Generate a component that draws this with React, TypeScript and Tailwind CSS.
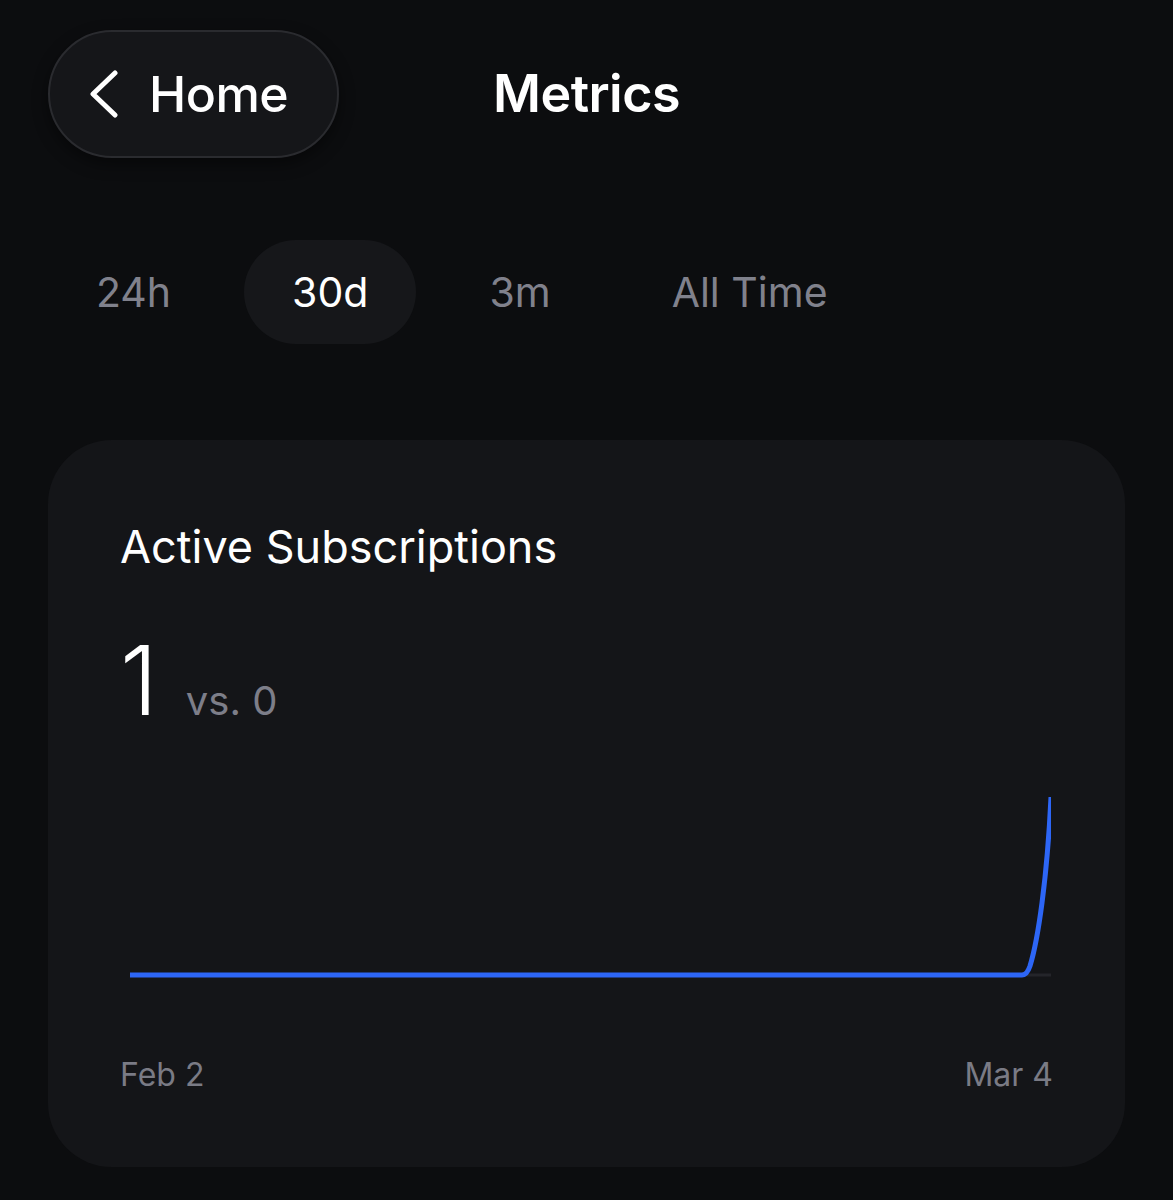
import React, { useState } from 'react';

const tabs = ['24h', '30d', '3m', 'All Time'];

function ChevronLeft() {
  return (
    <svg width="30" height="48" viewBox="0 0 30 48" fill="none">
      <polyline
        points="26,3 4,24 26,45"
        stroke="white"
        strokeWidth="5"
        strokeLinecap="round"
        strokeLinejoin="round"
      />
    </svg>
  );
}

function SubscriptionsChart() {
  return (
    <svg width="931" height="200" viewBox="0 0 931 200" fill="none" className="block">
      <line x1="900" y1="185" x2="933" y2="185" stroke="#24252a" strokeWidth="3" />
      <path
        d="M10 185 L902 185 Q907 185 910 176 C918 150 927 90 931 7"
        stroke="#2d66f6"
        strokeWidth="5"
        strokeLinecap="butt"
        strokeLinejoin="round"
      />
    </svg>
  );
}

export default function App() {
  const [activeTab, setActiveTab] = useState('30d');

  return (
    <div
      className="w-full h-[1200px] bg-[#0c0d0f] px-12 pt-[30px] text-white"
      style={{ fontFamily: 'Inter, "Noto Sans", sans-serif' }}
    >
      {/* Header */}
      <div className="grid grid-cols-[1fr_auto_1fr] items-center">
        <button className="w-[291px] h-[128px] rounded-full bg-[#151619] border-2 border-[#2a2b2f] shadow-[0_6px_16px_rgba(0,0,0,0.45)] flex items-center pl-[39px]">
          <ChevronLeft />
          <span className="ml-[30px] text-[50px] font-medium leading-none tracking-[-0.01em]">Home</span>
        </button>
        <h1 className="text-[52px] font-semibold leading-none tracking-[-0.01em]">Metrics</h1>
        <div />
      </div>

      {/* Range tabs */}
      <div className="mt-[82px] flex gap-[25px]">
        {tabs.map((tab) => (
          <button
            key={tab}
            onClick={() => setActiveTab(tab)}
            className={`h-[104px] px-12 rounded-full text-[41px] leading-none ${
              activeTab === tab ? 'bg-[#16171a] text-white' : 'text-[#80818c]'
            }`}
          >
            {tab}
          </button>
        ))}
      </div>

      {/* Card */}
      <div className="mt-[96px] rounded-[64px] bg-[#141518] pl-[72px] pr-[74px] pt-[84px] pb-[76px]">
        <h2 className="text-[45px] leading-none">Active Subscriptions</h2>
        <div className="mt-[63px] flex items-baseline">
          <span className="text-[96px] font-light leading-none">1</span>
          <span className="ml-[28px] text-[40px] leading-none text-[#7d7e89]">vs. 0</span>
        </div>
        <div className="mt-[62px]">
          <SubscriptionsChart />
        </div>
        <div className="mt-[69px] flex justify-between text-[32px] leading-none text-[#7a7b85]">
          <span>Feb 2</span>
          <span className="mr-[-2px]">Mar 4</span>
        </div>
      </div>
    </div>
  );
}
